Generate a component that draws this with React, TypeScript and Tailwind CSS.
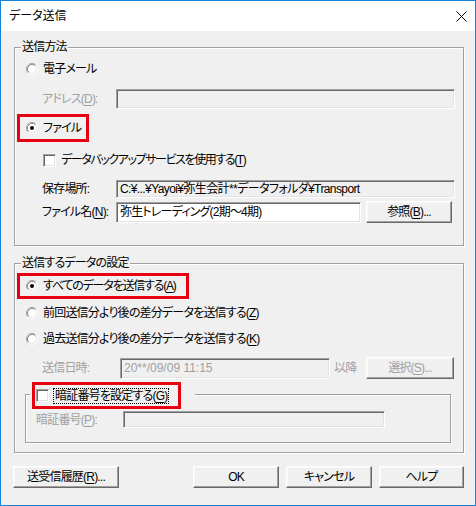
import type { ReactNode } from 'react';

const sunken =
    'border border-t-[#a0a0a0] border-l-[#a0a0a0] border-b-white border-r-white shadow-[inset_1px_1px_0_#696969,inset_-1px_-1px_0_#e3e3e3]';
const raised =
    'border border-t-white border-l-white border-b-[#696969] border-r-[#696969] shadow-[inset_-1px_-1px_0_#a0a0a0,inset_1px_1px_0_#f8f8f8] bg-[#f0f0f0] flex items-center justify-center leading-[16px]';
const groupBox = 'relative border border-[#a0a0a0] shadow-[1px_1px_0_#ffffff,inset_1px_1px_0_#ffffff]';
const redBox = 'border-[3px] border-[#e60012] flex items-center';

const Key = ({ k }: { k: string }) => <u className="underline-offset-[2px]">{k}</u>;

const Radio = ({ checked }: { checked?: boolean }) => (
    <svg width="12" height="12" viewBox="0 0 12 12" className="shrink-0">
        <circle cx="6" cy="6" r="5" fill="#ffffff" />
        <path d="M2.11 9.89 A5.5 5.5 0 0 1 9.89 2.11" fill="none" stroke="#a0a0a0" />
        <path d="M2.82 9.18 A4.5 4.5 0 0 1 9.18 2.82" fill="none" stroke="#8a8a8a" />
        <path d="M9.89 2.11 A5.5 5.5 0 0 1 2.11 9.89" fill="none" stroke="#ffffff" />
        <path d="M9.18 2.82 A4.5 4.5 0 0 1 2.82 9.18" fill="none" stroke="#e3e3e3" />
        {checked && <circle cx="6" cy="6" r="2" fill="#000000" />}
    </svg>
);

const Checkbox = () => <div className={'w-[13px] h-[13px] shrink-0 bg-white ' + sunken} />;

const RadioRow = ({ checked, children, className = '' }: { checked?: boolean; children: ReactNode; className?: string }) => (
    <div className="flex items-center gap-[5px]">
        <Radio checked={checked} />
        <span className={'leading-[16px] whitespace-nowrap ' + className}>{children}</span>
    </div>
);

const Legend = ({ children }: { children: ReactNode }) => (
    <span className="absolute left-[6px] top-[-9px] px-[1px] bg-[#f0f0f0] leading-[16px] whitespace-nowrap">
        {children}
    </span>
);

export default function App() {
    return (
        <div className="w-[476px] h-[506px] border border-[#1883d7] bg-[#f0f0f0] flex flex-col overflow-hidden text-[12px] tracking-[-0.8px] text-black font-['Liberation_Sans','Noto_Sans_CJK_JP',sans-serif] [font-feature-settings:'palt']">
            <div className="h-[30px] shrink-0 bg-white flex items-center justify-between pl-[8px] pr-[8px]">
                <span className="leading-[16px] tracking-normal">データ送信</span>
                <svg width="11" height="11" viewBox="0 0 11 11">
                    <path d="M0.5 0.5 L10.5 10.5 M10.5 0.5 L0.5 10.5" stroke="#000000" strokeWidth="1" />
                </svg>
            </div>

            <div className="flex flex-col pl-[13px] pr-[11px]">
                {/* 送信方法 */}
                <div className={'mt-[16px] h-[199px] flex flex-col ' + groupBox}>
                    <Legend>送信方法</Legend>
                    <div className="mt-[11px] h-[20px] flex items-center pl-[11px]">
                        <RadioRow>電子メール</RadioRow>
                    </div>
                    <div className="mt-[10px] h-[20px] flex items-center pl-[27px]">
                        <span className="w-[74px] text-[#a0a0a0] leading-[16px]">
                            アドレス(<Key k="D" />):
                        </span>
                        <div className={'w-[339px] h-[20px] bg-[#f0f0f0] ' + sunken} />
                    </div>
                    <div className={'mt-[5px] ml-[2px] w-[72px] h-[28px] pl-[6px] ' + redBox}>
                        <RadioRow checked>ファイル</RadioRow>
                    </div>
                    <div className="mt-[8px] h-[20px] flex items-center pl-[28px] gap-[5px]">
                        <Checkbox />
                        <span className="leading-[16px] tracking-[-1.4px]">
                            データバックアップサービスを使用する(<Key k="T" />)
                        </span>
                    </div>
                    <div className="mt-[10px] h-[18px] flex items-center pl-[27px]">
                        <span className="w-[74px] leading-[16px]">保存場所:</span>
                        <div className={'w-[339px] h-[18px] bg-[#f0f0f0] flex items-center pl-[3px] ' + sunken}>
                            <span className="leading-[14px] whitespace-nowrap tracking-[-0.6px]">
                                C:¥...¥Yayoi¥弥生会計**データフォルダ¥Transport
                            </span>
                        </div>
                    </div>
                    <div className="mt-[3px] h-[22px] flex items-center pl-[27px]">
                        <span className="w-[74px] leading-[16px]">
                            ファイル名(<Key k="N" />):
                        </span>
                        <div className={'w-[245px] h-[21px] bg-white flex items-center pl-[3px] ' + sunken}>
                            <span className="leading-[14px] whitespace-nowrap">弥生トレーディング(2期～4期)</span>
                        </div>
                        <button className={'ml-[5px] w-[86px] h-[22px] ' + raised}>
                            参照(<Key k="B" />)...
                        </button>
                    </div>
                </div>

                {/* 送信するデータの設定 */}
                <div className={'mt-[17px] h-[190px] flex flex-col ' + groupBox}>
                    <Legend>送信するデータの設定</Legend>
                    <div className={'mt-[9px] ml-[2px] w-[172px] h-[26px] pl-[6px] ' + redBox}>
                        <RadioRow checked className="tracking-[-1.2px]">
                            すべてのデータを送信する(<Key k="A" />)
                        </RadioRow>
                    </div>
                    <div className="mt-[4px] h-[20px] flex items-center pl-[11px]">
                        <RadioRow>
                            前回送信分より後の差分データを送信する(<Key k="Z" />)
                        </RadioRow>
                    </div>
                    <div className="mt-[6px] h-[20px] flex items-center pl-[11px]">
                        <RadioRow>
                            過去送信分より後の差分データを送信する(<Key k="K" />)
                        </RadioRow>
                    </div>
                    <div className="mt-[8px] h-[22px] flex items-center pl-[27px] text-[#a0a0a0]">
                        <span className="w-[78px] leading-[16px]">送信日時:</span>
                        <div className={'w-[210px] h-[21px] bg-[#f0f0f0] flex items-center pl-[3px] ' + sunken}>
                            <span className="leading-[14px] tracking-normal">20**/09/09 11:15</span>
                        </div>
                        <span className="ml-[4px] w-[32px] leading-[16px]">以降</span>
                        <button className={'w-[88px] h-[22px] text-[#a0a0a0] ' + raised}>
                            選択(<Key k="S" />)...
                        </button>
                    </div>

                    <div className={'mt-[15px] ml-[10px] w-[426px] h-[49px] flex flex-col ' + groupBox}>
                        <div className="absolute left-[4px] top-[-13px] pl-[2px] pr-[14px] bg-[#f0f0f0]">
                            <div className={'w-[149px] h-[27px] pl-[1px] ' + redBox}>
                                <Checkbox />
                                <span className="ml-[4px] px-[1px] border border-dotted border-black leading-[14px] whitespace-nowrap">
                                    暗証番号を設定する(<Key k="G" />)
                                </span>
                            </div>
                        </div>
                        <div className="mt-[16px] h-[17px] flex items-center pl-[10px]">
                            <span className="w-[87px] text-[#a0a0a0] leading-[16px]">
                                暗証番号(<Key k="P" />):
                            </span>
                            <div className={'w-[262px] h-[17px] bg-[#f0f0f0] ' + sunken} />
                        </div>
                    </div>
                </div>

                {/* buttons */}
                <div className="mt-[13px] h-[22px] flex -ml-[1px]">
                    <button className={'w-[106px] h-[22px] ' + raised}>
                        送受信履歴(<Key k="R" />)...
                    </button>
                    <button className={'ml-[74px] w-[86px] h-[22px] ' + raised}>OK</button>
                    <button className={'ml-[7px] w-[86px] h-[22px] ' + raised}>キャンセル</button>
                    <button className={'ml-[7px] w-[85px] h-[22px] ' + raised}>ヘルプ</button>
                </div>
            </div>
        </div>
    );
}
